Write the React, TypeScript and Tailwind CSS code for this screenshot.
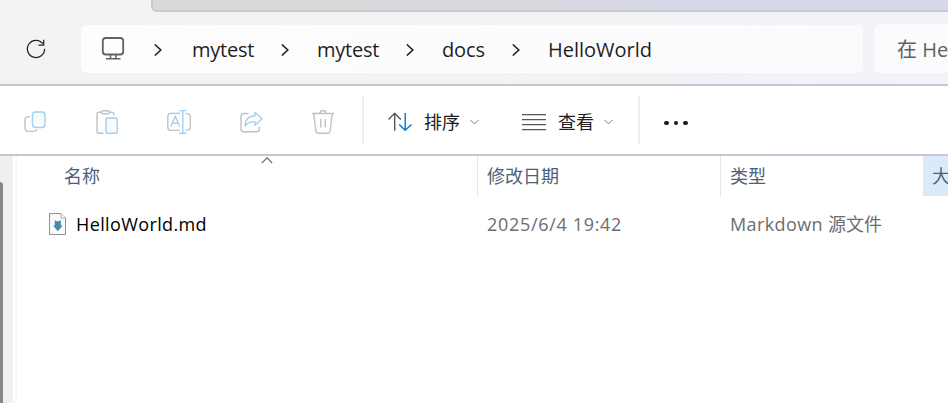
import type { ReactNode } from "react";

const uiFont = "font-['Open_Sans','Noto_Sans_CJK_SC',sans-serif]";

function Chevron({ className = "" }: { className?: string }) {
  return (
    <svg className={`h-3 w-2 shrink-0 ${className}`} viewBox="0 0 8 12" fill="none" stroke="#222" strokeWidth="1.6">
      <path d="M0.8 0.5 6.8 6 0.8 11.5" />
    </svg>
  );
}

function Crumb({ children, className }: { children: ReactNode; className: string }) {
  return <span className={`mt-0.5 shrink-0 whitespace-nowrap text-[20px] leading-6 text-[#1f1f1f] ${className}`}>{children}</span>;
}

function TopStrip() {
  return (
    <div className="flex h-3 shrink-0 pl-[151px]">
      <div className="h-3 flex-1 rounded-bl-md border-b-2 border-l-2 border-b-[#c9c9d2] border-l-[#c9c9c9] bg-linear-to-r from-[#d9d9d9] from-20% via-[#d9d9e2] via-50% to-[#d6d8ec] to-75%" />
    </div>
  );
}

function AddressRow() {
  return (
    <div className="flex h-[72px] shrink-0 items-center">
      <svg className="mt-0.5 ml-[25px] h-6 w-[22px] shrink-0" viewBox="25 37 22 24" fill="none" stroke="#222" strokeWidth="1.25">
        <path d="M42.8 43.6A8.6 8.6 0 1 0 44.6 48.7M43.7 39.8V45H38.5" />
      </svg>
      <div className="mt-[2px] ml-[34px] flex h-12 w-[782px] shrink-0 items-center rounded-md bg-linear-to-r from-[#fdfdfd] to-[#fbfbfe]">
        <svg className="ml-5 h-[26px] w-6 shrink-0" viewBox="101 36 24 26" fill="none" stroke="#626262" strokeWidth="1.8">
          <rect x="102.8" y="38" width="20.4" height="16.5" rx="3" />
          <path d="M106 58.8H120.5M110.5 55V58.5M115.8 55V58.5" strokeWidth="1.5" />
        </svg>
        <Chevron className="mt-0.5 ml-[29px]" />
        <Crumb className="ml-[30px] w-[89px] tracking-[-0.25px]">mytest</Crumb>
        <Chevron className="mt-0.5" />
        <Crumb className="ml-[28px] w-[89px] tracking-[-0.25px]">mytest</Crumb>
        <Chevron className="mt-0.5" />
        <Crumb className="ml-[28px] w-[70px] tracking-[-0.15px]">docs</Crumb>
        <Chevron className="mt-0.5" />
        <Crumb className="ml-[28px]">HelloWorld</Crumb>
      </div>
      <div className="mt-px ml-[11px] flex h-[49px] flex-1 items-center overflow-hidden rounded-l-md bg-[#fbfbfe] pl-[23px]">
        <span className="mt-0.5 whitespace-nowrap text-[20px] leading-6 text-[#606060]">在 HelloWorld 中搜索</span>
      </div>
    </div>
  );
}

function SmallDown() {
  return (
    <svg className="h-2 w-[9px] shrink-0" viewBox="0 0 9 8" fill="none" stroke="#808080" strokeWidth="1">
      <path d="M0.5 2 4.5 6 8.5 2" />
    </svg>
  );
}

function Toolbar() {
  return (
    <div className="flex h-[68px] shrink-0 items-center bg-white pl-[23px]">
      <div className="flex gap-12">
        <svg className="h-7 w-6" viewBox="23 106 24 28" fill="none" strokeWidth="1.4">
          <path d="M30 116.6H28.5Q25 116.6 25 120V128Q25 131.4 28.5 131.4H33Q36 131.4 37 129.5" stroke="#c1c1c1" />
          <rect x="32.4" y="112" width="12.6" height="15.5" rx="3" stroke="#a0cff1" fill="#fafafa" />
        </svg>
        <svg className="h-7 w-6" viewBox="95 106 24 28" fill="none" strokeWidth="1.4" stroke="#c1c1c1">
          <path d="M103.5 133.3H98.5Q97 133.3 97 131.8V113.7Q97 112.2 98.5 112.2H101.5M109.5 112.2H112Q113.8 112.2 113.8 114V115.5" />
          <rect x="101.5" y="110.7" width="8" height="3" rx="1.5" />
          <rect x="106" y="118" width="11.2" height="15.3" rx="1.5" stroke="#a0cff1" fill="#fafafa" />
        </svg>
        <svg className="h-7 w-6" viewBox="167 106 24 28" fill="none" strokeWidth="1.4" stroke="#a0cff1">
          <path d="M180 113.4H171Q167.8 113.4 167.8 117V127Q167.8 130.4 171 130.4H180M185.5 113.4Q190.3 113.4 190.3 117V127Q190.3 130.4 185.5 130.4" stroke="#c1c1c1" />
          <path d="M170.7 126.5 175.3 116.5 179.8 126.5M172.3 123.3H178.2M182.8 110.5V133.4M179.2 110.6H186.3M179.2 133.3H186.3" />
        </svg>
        <svg className="h-7 w-6" viewBox="239 106 24 28" fill="none" strokeWidth="1.4" strokeLinejoin="round">
          <path d="M248.5 113.5H244Q241 113.5 241 116.5V128.7Q241 131.8 244 131.8H256Q259.4 131.8 259.4 128.7V127" stroke="#c1c1c1" />
          <path d="M255 112.2 262 118.8 255 125.3V121.7Q248.5 121.3 245 126Q245.2 116.2 255 115.8Z" stroke="#a0cff1" />
        </svg>
        <svg className="h-7 w-6" viewBox="311 106 24 28" fill="none" strokeWidth="1.4" stroke="#c1c1c1">
          <path d="M312 113.5H334M313.8 113.8 315.8 130.5Q316.2 133.3 318.5 133.3H327.5Q329.8 133.3 330.2 130.5L332.2 113.8M320 113.2Q320 110.5 323 110.5T326 113.2M320.8 119V127.5M325.3 119V127.5" />
        </svg>
      </div>
      <div className="ml-[27px] h-12 w-0.5 shrink-0 bg-[#ededed]" />
      <svg className="mt-1 ml-6 h-5 w-[25px] shrink-0" viewBox="388 112 25 20" fill="none" strokeWidth="1.4">
        <path d="M394.7 130.7V113.3M388.5 119.5 394.7 113.3 400.8 119.5" stroke="#595959" />
        <path d="M405.2 113V130M399.2 124.4 405.2 130.2 411.5 124.4" stroke="#0078d4" />
      </svg>
      <span className="mt-1 ml-[11px] w-[46px] shrink-0 text-[18px] leading-6 text-[#202020]">排序</span>
      <div className="mt-1 flex"><SmallDown /></div>
      <svg className="mt-1 ml-[43px] h-[18px] w-6 shrink-0" viewBox="0 0 24 18" stroke="#565656" strokeWidth="1.3">
        <path d="M0 1.6H24M0 6.6H24M0 11.6H24M0 16.6H24" />
      </svg>
      <span className="mt-1 ml-3 w-[46px] shrink-0 text-[18px] leading-6 text-[#202020]">查看</span>
      <div className="mt-1 flex"><SmallDown /></div>
      <div className="ml-[25px] h-12 w-0.5 shrink-0 bg-[#ededed]" />
      <div className="mt-1.5 ml-6 flex gap-[5px]">
        <i className="size-[4.6px] rounded-full bg-[#1b1b1b]" />
        <i className="size-[4.6px] rounded-full bg-[#1b1b1b]" />
        <i className="size-[4.6px] rounded-full bg-[#1b1b1b]" />
      </div>
    </div>
  );
}

function FileList() {
  return (
    <div className="flex min-h-0 flex-1 bg-white">
      <div className="flex w-[13px] shrink-0 flex-col bg-[#efefef] pt-[26px]">
        <div className="w-[3px] flex-1 rounded-tr-sm bg-[#858585]" />
      </div>
      <div className="ml-0.5 w-0.5 shrink-0 bg-[#f7f7f7]" />
      <div className="min-w-0 flex-1">
        <div className="flex h-10 text-[18px] leading-[41px] text-[#4c607a]">
          <div className="flex w-[461px] shrink-0 border-r border-[#e5e5e5] pl-[47px]">
            <span className="w-[196.5px]">名称</span>
            <svg className="mt-px h-[7px] w-3" viewBox="0 0 12 7" fill="none" stroke="#606060" strokeWidth="1.1">
              <path d="M0.8 6.2 6 0.8 11.2 6.2" />
            </svg>
          </div>
          <div className="w-[243px] shrink-0 border-r border-[#e5e5e5] pl-[9px]">修改日期</div>
          <div className="w-[202px] shrink-0 pl-[9px]">类型</div>
          <div className="flex-1 overflow-hidden bg-[#d9ebf9] pl-[9px] whitespace-nowrap">大小</div>
        </div>
        <div className="flex h-14 items-center pl-8 text-[18px] leading-6 text-[#6d6d6d]">
          <svg className="h-[22px] w-[17px] shrink-0" viewBox="0 0 17 22">
            <path d="M0.5 0.5H12L16.5 5V21.5H0.5Z" fill="#fafafa" stroke="#929292" />
            <path d="M12 0.5V5H16.5" fill="#fff" stroke="#aaa" />
            <path d="M5.8 7 7.5 8.2H10L11.8 7V12.5H13.8L8.9 18.2 4 12.5H5.8Z" fill="#438aa8" />
          </svg>
          <span className="ml-[10px] w-[411px] shrink-0 tracking-[0.38px] text-black">HelloWorld.md</span>
          <span className="w-[243px] shrink-0 tracking-[0.68px]">2025/6/4 19:42</span>
          <span className="whitespace-nowrap"><span className="tracking-[0.4px]">Markdown </span>源文件</span>
        </div>
      </div>
    </div>
  );
}

export default function App() {
  return (
    <div className={`flex h-[403px] w-full flex-col overflow-hidden bg-linear-to-r from-[#f3f3f3] from-45% to-[#f2f2f9] ${uiFont}`}>
      <TopStrip />
      <AddressRow />
      <div className="h-0.5 shrink-0 bg-linear-to-r from-[#c8c8c8] from-40% to-[#c5c5dd]" />
      <Toolbar />
      <div className="h-0.5 shrink-0 bg-linear-to-r from-[#c8c8c8] from-30% to-[#c5c5dd]" />
      <FileList />
    </div>
  );
}
